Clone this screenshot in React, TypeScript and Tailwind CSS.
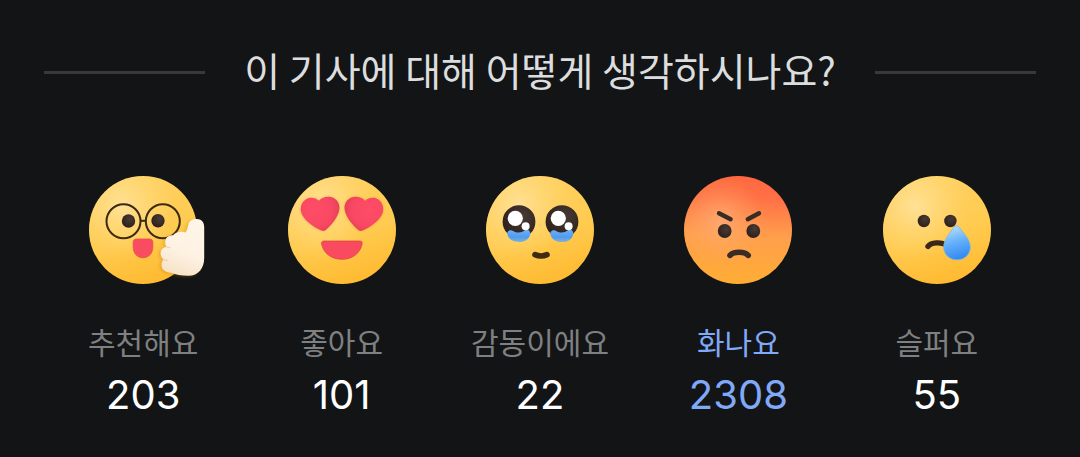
import { useState, type ReactNode } from "react";

type Reaction = {
  id: string;
  label: string;
  count: number;
  icon: ReactNode;
};

const Face = ({ children, angry = false }: { children: ReactNode; angry?: boolean }) => (
  <svg viewBox="0 0 108 108" className="size-[108px] overflow-visible" aria-hidden="true">
    <circle cx="54" cy="54" r="54" fill={angry ? "url(#angry)" : "url(#skin)"} />
    {angry && <circle cx="54" cy="54" r="54" fill="url(#angryGlow)" />}
    {!angry && <circle cx="54" cy="54" r="54" fill="url(#skinGlow)" />}
    {children}
  </svg>
);

// gradients shared by all faces
const Gradients = () => (
  <svg className="absolute size-0" aria-hidden="true">
    <defs>
      <linearGradient id="skin" x1="0.35" y1="0" x2="0.65" y2="1">
        <stop offset="0" stopColor="#ffd163" />
        <stop offset="0.55" stopColor="#ffcb50" />
        <stop offset="1" stopColor="#ffb92f" />
      </linearGradient>
      <radialGradient id="skinGlow" cx="0.3" cy="0.28" r="0.5">
        <stop offset="0" stopColor="#ffe6a6" stopOpacity="0.8" />
        <stop offset="1" stopColor="#ffdc80" stopOpacity="0" />
      </radialGradient>
      <linearGradient id="angry" x1="0.54" y1="0" x2="0.5" y2="1">
        <stop offset="0" stopColor="#ff6840" />
        <stop offset="0.2" stopColor="#ff7046" />
        <stop offset="0.55" stopColor="#ff9f4c" />
        <stop offset="1" stopColor="#ffad34" />
      </linearGradient>
      <radialGradient id="angryGlow" cx="0.34" cy="0.42" r="0.42">
        <stop offset="0" stopColor="#ffb07c" stopOpacity="0.75" />
        <stop offset="1" stopColor="#ffa55c" stopOpacity="0" />
      </radialGradient>
      <radialGradient id="eye" cx="0.6" cy="0.35" r="0.7">
        <stop offset="0" stopColor="#483a34" />
        <stop offset="1" stopColor="#2c1e1a" />
      </radialGradient>
      <radialGradient id="heart" cx="0.35" cy="0.4" r="0.7">
        <stop offset="0" stopColor="#ff4d66" />
        <stop offset="0.65" stopColor="#f94863" />
        <stop offset="1" stopColor="#e44056" />
      </radialGradient>
      <linearGradient id="hand" x1="0.7" y1="0" x2="0.4" y2="1">
        <stop offset="0" stopColor="#fff6e8" />
        <stop offset="0.6" stopColor="#fdf1e2" />
        <stop offset="1" stopColor="#f7e2c6" />
      </linearGradient>
      <linearGradient id="drop" x1="0.4" y1="0" x2="0.65" y2="1">
        <stop offset="0" stopColor="#b5ddfa" />
        <stop offset="0.45" stopColor="#66b1fa" />
        <stop offset="1" stopColor="#2e86f2" />
      </linearGradient>
      <linearGradient id="tear" x1="0" y1="0" x2="0" y2="1">
        <stop offset="0" stopColor="#6bb0fb" />
        <stop offset="0.6" stopColor="#4f9bf0" />
        <stop offset="1" stopColor="#86b4cc" />
      </linearGradient>
      <filter id="soft" x="-20%" y="-20%" width="140%" height="140%">
        <feGaussianBlur stdDeviation="1.6" />
      </filter>
    </defs>
  </svg>
);

const HAND =
  "M96.5 56.5C98.5 54 98.5 51 99.5 48C100.5 44.5 103.5 43 107.5 43C112.5 43 115.2 46 115.2 51V82C115.2 92 109.5 99.8 99.5 99.8C92 99.8 87 98.8 82 96.8C76 96.2 72.3 93.5 72.5 89C72.6 86.5 73.4 84.8 74.4 83.2C71.2 80.8 70.5 75.4 73.6 72.6C74.6 71.6 75.8 71.1 77.2 70.8C75.4 67 75.8 62.2 79.4 60.2C81 59.2 82.8 59 84.2 59.2C86.5 55.8 92.5 54.8 96.5 56.5Z";

const RecommendFace = () => (
  <Face>
    <g fill="none" stroke="#3a2a12" strokeWidth="2">
      <circle cx="34.5" cy="45.3" r="17" />
      <circle cx="73.8" cy="45.3" r="17" />
      <path d="M51.5 44.8H56.8" />
    </g>
    <circle cx="39.5" cy="45" r="6.7" fill="url(#eye)" />
    <circle cx="69" cy="44.7" r="6.7" fill="url(#eye)" />
    <path
      d="M47.5 63H60.5C62.6 63 63.8 64.2 63.8 66.3V71C63.8 77.4 59.8 81.7 54 81.7C48.2 81.7 44.2 77.4 44.2 71V66.3C44.2 64.2 45.4 63 47.5 63Z"
      fill="#fa4c60"
      stroke="#e2524a"
      strokeWidth="0.8"
    />
    <path d={HAND} fill="#c07a10" opacity="0.3" transform="translate(-2 1)" filter="url(#soft)" />
    <path d={HAND} fill="url(#hand)" />
    <g fill="none" stroke="#ecd3b4" strokeWidth="1.2" strokeLinecap="round">
      <path d="M77.2 70.8C78.4 71.6 79.4 71.8 80.8 71.6" />
      <path d="M74.4 83.2C75.6 84.2 77 84.6 78.4 84.4" />
    </g>
  </Face>
);

const LoveFace = () => {
  const heart =
    "M30.8 24.8C33.4 21.6 37.6 20.3 41.5 20.7C47.7 21.3 51.7 26.4 51.5 32.3C51.3 39.5 44.4 48.2 37.8 54C36.4 55.2 34.9 55.4 33.3 54.6C25.2 50.8 14.2 43.2 12.9 35.2C11.9 29 15.6 23 21.6 21.8C25.2 21.2 28.6 22.4 30.8 24.8Z";
  return (
    <Face>
      <g fill="#e08a28" opacity="0.45" filter="url(#soft)">
        <path d={heart} />
        <path d={heart} transform="translate(108 0) scale(-1 1)" />
      </g>
      <path d={heart} fill="url(#heart)" />
      <path d={heart} fill="url(#heart)" transform="translate(108 0) scale(-1 1)" />
      <path
        d="M36 65H71.7C73.6 65 74.5 66.2 74.1 68C72.3 77.2 64.5 83.3 53.9 83.3C43.3 83.3 35.4 77.2 33.6 68C33.2 66.2 34.1 65 36 65Z"
        fill="#f94a5f"
        stroke="#dd4a42"
        strokeWidth="0.8"
      />
    </Face>
  );
};

const TouchedEye = ({ x }: { x: number }) => (
  <g transform={`translate(${x} 0)`}>
    <circle cx="33" cy="45.7" r="16.4" fill="url(#eye)" />
    <path
      d="M21.4 58.4C20.6 54.6 24.8 53 27.2 55C30.6 57.2 35.6 57 38.6 54.6C41.2 52.6 45 54.8 44.2 58.4C42.8 63.6 38.4 66 32.9 66C27.4 66 22.8 63.6 21.4 58.4Z"
      fill="url(#tear)"
    />
    <circle cx="29.3" cy="42.3" r="7.6" fill="#fff" />
    <circle cx="39.6" cy="50.3" r="4" fill="#fff" />
  </g>
);

const TouchedFace = () => (
  <Face>
    <TouchedEye x={0} />
    <TouchedEye x={43} />
    <path d="M49 78.6Q55 81.4 61 78.6" fill="none" stroke="#3f2a14" strokeWidth="5.6" strokeLinecap="round" />
  </Face>
);

const AngryFace = () => (
  <Face angry>
    <g fill="none" stroke="#392b26" strokeLinecap="round">
      <path d="M35 37.2L46.6 43.2M75 37.2L63.8 43.2" strokeWidth="4.4" />
      <path d="M46 79.4C49.6 75.2 60.6 75.2 64.2 79.4" strokeWidth="5.6" />
    </g>
    <circle cx="40.7" cy="55" r="6.9" fill="url(#eye)" />
    <circle cx="69.3" cy="55" r="6.9" fill="url(#eye)" />
  </Face>
);

const SadFace = () => (
  <Face>
    <circle cx="40.9" cy="45" r="6.2" fill="url(#eye)" />
    <circle cx="67.4" cy="45" r="6.2" fill="url(#eye)" />
    <path d="M45 70.4C48 66.4 58 65.4 64 69.6" fill="none" stroke="#3b2718" strokeWidth="5.4" strokeLinecap="round" />
    <path
      d="M70.8 51.4C72.4 49.2 74.6 49.2 76.2 51.4C81 57.6 87.3 63.6 87.3 71.2C87.3 78.4 81.4 83.8 74 83.8C66.6 83.8 60.7 78.4 60.7 71.2C60.7 63.6 66.4 57.6 70.8 51.4Z"
      fill="url(#drop)"
      stroke="#78b8e4"
      strokeWidth="0.8"
    />
  </Face>
);

const reactions: Reaction[] = [
  { id: "recommend", label: "추천해요", count: 203, icon: <RecommendFace /> },
  { id: "like", label: "좋아요", count: 101, icon: <LoveFace /> },
  { id: "touched", label: "감동이에요", count: 22, icon: <TouchedFace /> },
  { id: "angry", label: "화나요", count: 2308, icon: <AngryFace /> },
  { id: "sad", label: "슬퍼요", count: 55, icon: <SadFace /> },
];

export default function App() {
  const [selected, setSelected] = useState("angry");

  return (
    <main className="min-h-screen border-b-4 border-[#141118] bg-[#131416] px-11 pt-11 pb-8 font-['Noto_Sans_CJK_KR',sans-serif]">
      <Gradients />
      <div className="flex items-center justify-between">
        <span className="h-[3px] w-[161px] shrink bg-[#38393b]" />
        <h1 className="pb-1.5 text-[39px] leading-[50px] text-[#dcddde]">이 기사에 대해 어떻게 생각하시나요?</h1>
        <span className="h-[3px] w-[161px] shrink bg-[#38393b]" />
      </div>

      <div className="mt-19 grid grid-cols-5">
        {reactions.map((reaction) => {
          const active = reaction.id === selected;
          return (
            <button
              key={reaction.id}
              type="button"
              aria-pressed={active}
              onClick={() => setSelected(reaction.id)}
              className="flex cursor-pointer flex-col items-center"
            >
              {reaction.icon}
              <span className={`mt-[37px] text-[30px] leading-10 ${active ? "text-[#80a9f7]" : "text-[#7f8081]"}`}>
                {reaction.label}
              </span>
              <span
                className={`mt-2.5 font-['Inter',sans-serif] text-[40px] leading-12 ${active ? "text-[#80a9f7]" : "text-white"}`}
              >
                {reaction.count}
              </span>
            </button>
          );
        })}
      </div>
    </main>
  );
}
